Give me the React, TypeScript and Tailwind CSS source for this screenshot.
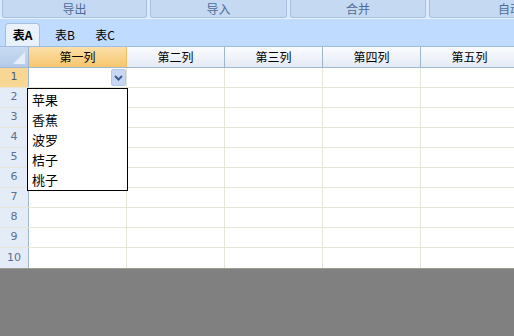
import React from "react";

const cols = ["第一列", "第二列", "第三列", "第四列", "第五列"];
const rows = [1, 2, 3, 4, 5, 6, 7, 8, 9, 10];
const items = ["苹果", "香蕉", "波罗", "桔子", "桃子"];
const font = { fontFamily: '"Noto Sans CJK SC", "Noto Sans", sans-serif' };

export default function App() {
  return (
    <div className="w-[514px] h-[336px] overflow-hidden flex flex-col bg-[#808080] relative" style={font}>
      {/* toolbar */}
      <div className="h-[19px] flex gap-[3px] pl-[2px] bg-[#dce9f8] border-b border-[#e8f1fb] shrink-0">
        <div className="w-[145px] h-[18px] bg-[#c5daf2] border border-t-0 border-[#a7c0e0] rounded-b-[3px] flex items-center justify-center text-[12px] text-[#4d6b98]">导出</div>
        <div className="w-[137px] h-[18px] bg-[#c5daf2] border border-t-0 border-[#a7c0e0] rounded-b-[3px] flex items-center justify-center text-[12px] text-[#4d6b98]">导入</div>
        <div className="w-[136px] h-[18px] bg-[#c5daf2] border border-t-0 border-[#a7c0e0] rounded-b-[3px] flex items-center justify-center text-[12px] text-[#4d6b98]">合并</div>
        <div className="flex-1 h-[18px] bg-[#c5daf2] border border-t-0 border-r-0 border-[#a7c0e0] rounded-bl-[3px] flex items-center pl-[68px] text-[12px] text-[#4d6b98] whitespace-nowrap overflow-hidden">自动</div>
      </div>
      {/* tabs */}
      <div className="h-[28px] bg-[#bfdbff] flex items-end pl-[5px] shrink-0 border-b border-[#9ebbe0]">
        <div className="w-[35px] h-[23px] bg-[#e9f1fb] border border-b-0 border-[#a5bfe2] rounded-t-[4px] flex items-center justify-center text-[12px] font-bold text-black">表A</div>
        <div className="w-[40px] h-[23px] flex items-center justify-center text-[12px] text-black ml-[5px]">表B</div>
        <div className="w-[40px] h-[23px] flex items-center justify-center text-[12px] text-black">表C</div>
      </div>
      {/* header */}
      <div className="flex h-[21px] shrink-0 bg-white border-b border-[#9eb6ce]">
        <div className="w-[29px] h-full bg-gradient-to-b from-[#c9dbf2] to-[#b4cbe9] border-r border-[#9eb6ce] relative shrink-0">
          <div className="absolute right-[3px] bottom-[3px] w-0 h-0 border-l-[12px] border-l-transparent border-b-[12px] border-b-[#e6eef9]" />
        </div>
        {cols.map((c, i) => (
          <div
            key={c}
            className={
              "w-[98px] h-full shrink-0 flex items-center justify-center text-[12px] text-black border-r " +
              (i === 0
                ? "bg-gradient-to-b from-[#fbe0a9] to-[#f6c66c] border-[#f1c15f]"
                : "bg-gradient-to-b from-[#fbfcfe] to-[#e3eaf4] border-[#9eb6ce]")
            }
          >
            {c}
          </div>
        ))}
      </div>
      {/* rows */}
      <div className="bg-white shrink-0 border-b border-[#9e9e8e]">
        {rows.map((r) => (
          <div key={r} className="flex h-[20px] border-b border-[#e6e6d8] last:border-b-0">
            <div
              className={
                "w-[29px] h-full shrink-0 flex items-center justify-center border-r border-[#9eb6ce] " +
                (r === 1 ? "bg-[#f8d694] text-[#4d5f80]" : "bg-[#e4ecf7] text-[#5a6f92]")
              }
              style={{ fontFamily: '"DejaVu Sans", sans-serif', fontSize: 11 }}
            >
              {r}
            </div>
            {cols.map((c) => (
              <div key={c} className="w-[98px] h-full shrink-0 border-r border-[#e6e6d8]" />
            ))}
          </div>
        ))}
      </div>
      <div className="flex-1 bg-[#808080]" />

      {/* select button */}
      <div className="absolute left-[111px] top-[69px] w-[15px] h-[17px] bg-[#c8d7f3] border border-[#b3c6ea] rounded-[2px] flex items-center justify-center">
        <svg width="9" height="6" viewBox="0 0 9 6">
          <path d="M1 1 L4.5 4.5 L8 1" stroke="#3e5c96" strokeWidth="2" fill="none" />
        </svg>
      </div>
      {/* dropdown */}
      <div className="absolute left-[27px] top-[88px] w-[101px] h-[103px] bg-white border border-black">
        {items.map((t) => (
          <div key={t} className="h-[20px] flex items-center pl-[4px] text-[13px] text-black leading-none">
            {t}
          </div>
        ))}
      </div>
    </div>
  );
}
